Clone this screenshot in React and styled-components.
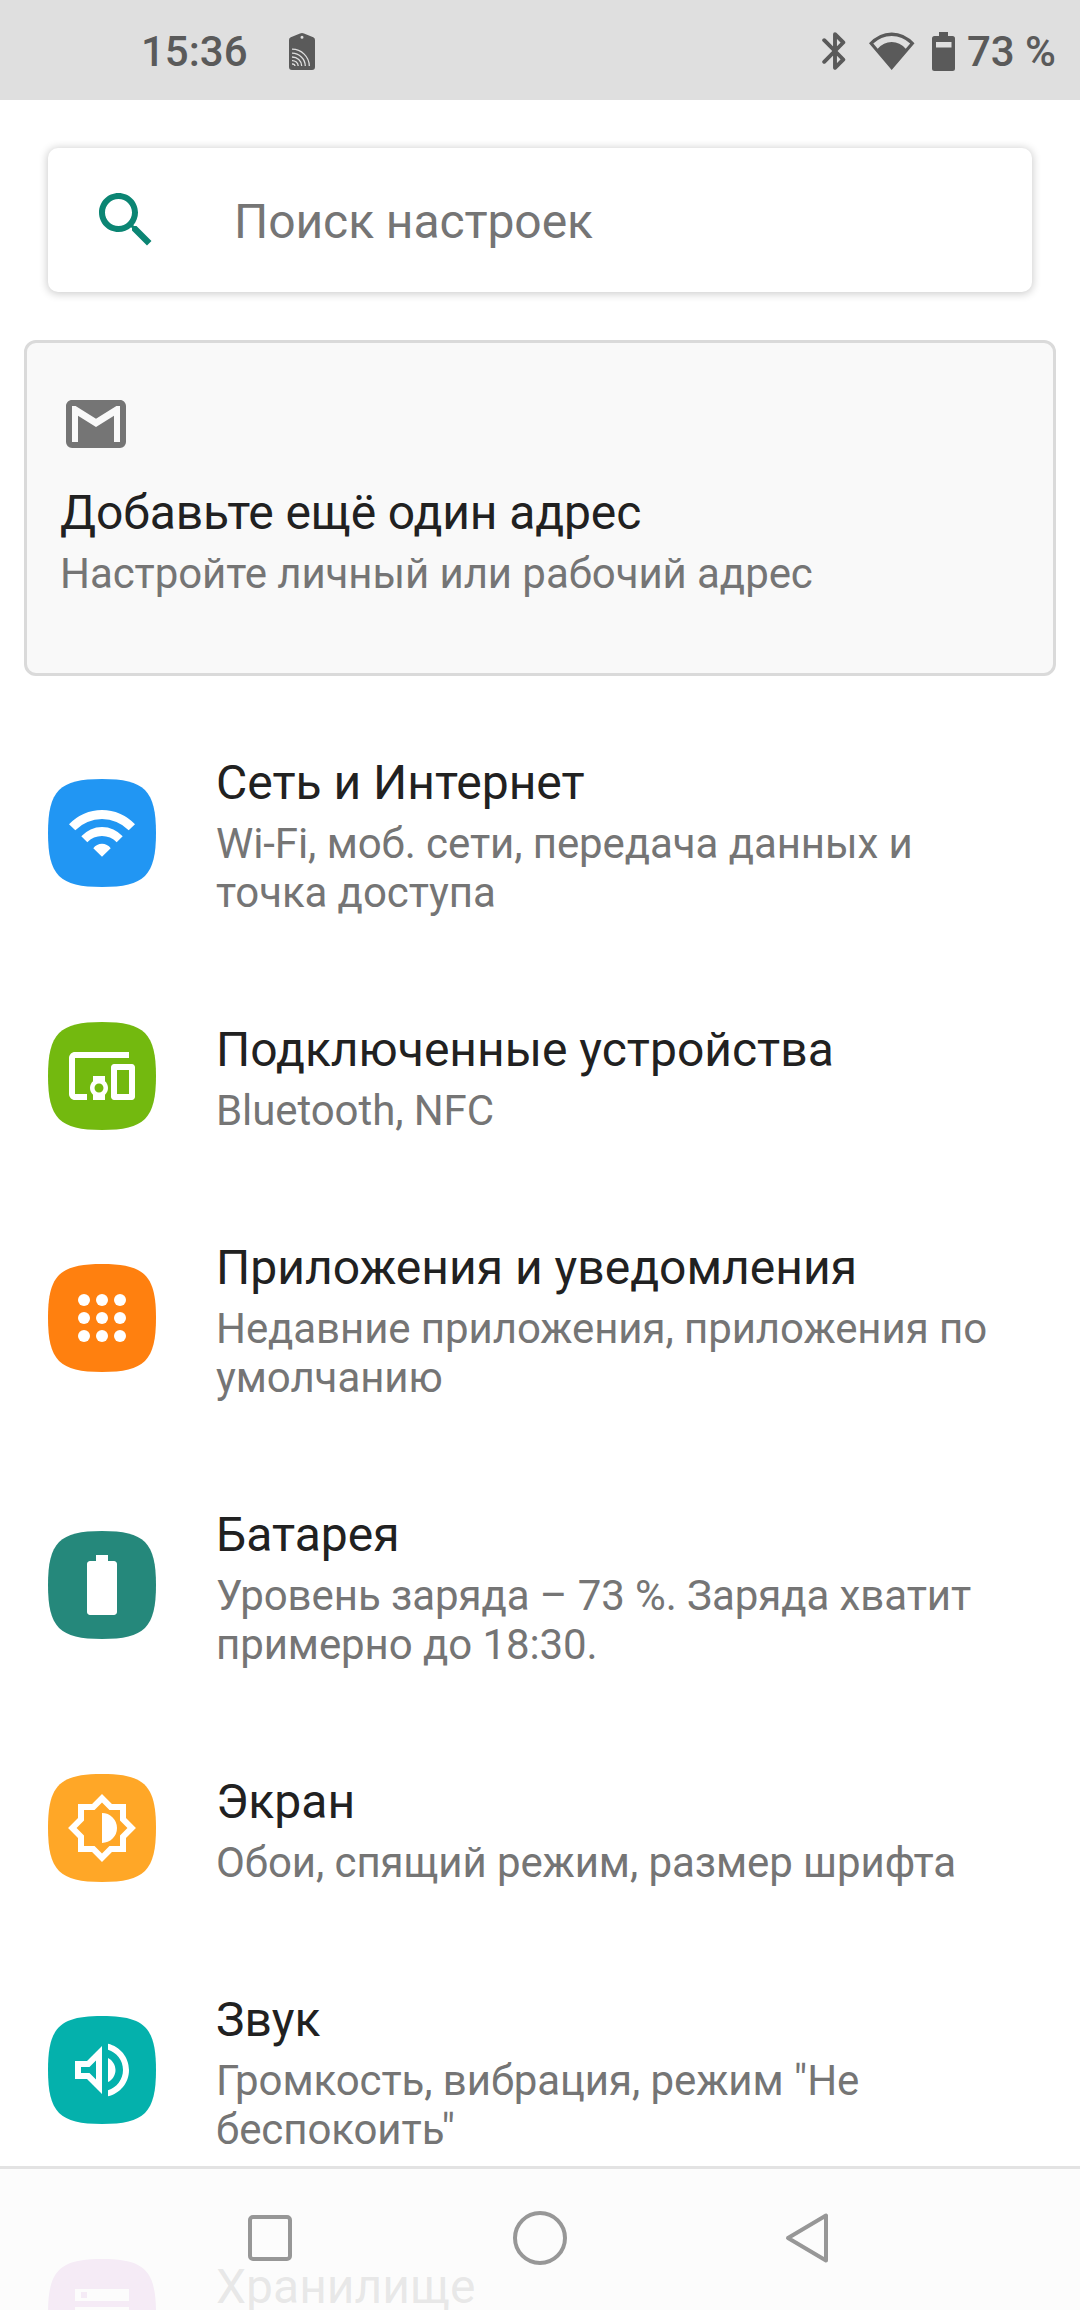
import React from "react";
import styled, { createGlobalStyle } from "styled-components";

const GlobalStyle = createGlobalStyle`
  * {
    box-sizing: border-box;
  }
  body {
    margin: 0;
    background: #fff;
    font-family: Roboto, "Noto Sans", sans-serif;
  }
`;

const settings = [
  {
    title: "Сеть и Интернет",
    lines: ["Wi-Fi, моб. сети, передача данных и", "точка доступа"],
    color: "#2196f3",
    icon: (
      <path d="M1 9.1A15.07 15.07 0 0 1 23 9.1L20.9 11.05A12.6 12.6 0 0 0 3.1 11.05zM5.1 13.1A9.2 9.2 0 0 1 18.9 13.1L16.9 15.05A6.8 6.8 0 0 0 7.1 15.05zM9.1 17.05A3.66 3.66 0 0 1 14.9 17.05L12 19.95z" />
    ),
  },
  {
    title: "Подключенные устройства",
    lines: ["Bluetooth, NFC"],
    color: "#73b90f",
    icon: (
      <path d="M3 6h18V4H3c-1.1 0-2 .9-2 2v12c0 1.1.9 2 2 2h4v-2H3V6zm10 6H9v1.78c-.61.55-1 1.33-1 2.22s.39 1.67 1 2.22V20h4v-1.78c.61-.55 1-1.34 1-2.22s-.39-1.67-1-2.22V12zm-2 5.5c-.83 0-1.5-.67-1.5-1.5s.67-1.5 1.5-1.5 1.5.67 1.5 1.5-.67 1.5-1.5 1.5zM22 8h-6c-.5 0-1 .5-1 1v10c0 .5.5 1 1 1h6c.5 0 1-.5 1-1V9c0-.5-.5-1-1-1zm-1 10h-4v-8h4v8z" />
    ),
  },
  {
    title: "Приложения и уведомления",
    lines: ["Недавние приложения, приложения по", "умолчанию"],
    color: "#ff800f",
    icon: [6, 12, 18].map((y) =>
      [6, 12, 18].map((x) => <circle key={`${x}-${y}`} cx={x} cy={y} r="2" />)
    ),
  },
  {
    title: "Батарея",
    lines: ["Уровень заряда – 73 %. Заряда хватит", "примерно до 18:30."],
    color: "#25887b",
    icon: (
      <path d="M16 4h-2V2h-4v2H8c-.55 0-1 .45-1 1v16c0 .55.45 1 1 1h8c.55 0 1-.45 1-1V5c0-.55-.45-1-1-1z" />
    ),
  },
  {
    title: "Экран",
    lines: ["Обои, спящий режим, размер шрифта"],
    color: "#ffa727",
    icon: (
      <path d="M20 8.69V4h-4.69L12 .69 8.69 4H4v4.69L.69 12 4 15.31V20h4.69L12 23.31 15.31 20H20v-4.69L23.31 12 20 8.69zm-2 5.79V18h-3.52L12 20.48 9.52 18H6v-3.52L3.52 12 6 9.52V6h3.52L12 3.52 14.48 6H18v3.52L20.48 12 18 14.48zM12 17V7a5 5 0 0 1 0 10z" />
    ),
  },
  {
    title: "Звук",
    lines: ['Громкость, вибрация, режим "Не', 'беспокоить"'],
    color: "#04b1ac",
    icon: (
      <path d="M3 9v6h4l5 5V4L7 9H3zm7-.17v6.34L7.83 13H5v-2h2.83L10 8.83zM16.5 12c0-1.77-1.02-3.29-2.5-4.03v8.05c1.48-.73 2.5-2.25 2.5-4.02zM14 3.23v2.06c2.89.86 5 3.54 5 6.71s-2.11 5.85-5 6.71v2.06c4.01-.91 7-4.49 7-8.77s-2.99-7.86-7-8.77z" />
    ),
  },
  {
    title: "Хранилище",
    lines: [],
    color: "#ab47bc",
    icon: (
      <path d="M3 20h18v-4H3v4zm2-3h2v2H5v-2zM3 4v4h18V4H3zm4 3H5V5h2v2zm-4 7h18v-4H3v4zm2-3h2v2H5v-2z" />
    ),
  },
];

const SettingIcon = ({ color, children }) => (
  <IconTile viewBox="0 0 108 108">
    <path
      fill={color}
      d="M54 0C11.5 0 0 11.5 0 54s11.5 54 54 54 54-11.5 54-54S96.5 0 54 0z"
    />
    <g fill="#fff" transform="translate(18 18) scale(3)">
      {children}
    </g>
  </IconTile>
);

const App = () => {
  return (
    <Screen>
      <GlobalStyle />
      <StatusBar>
        <Clock>15:36</Clock>
        <TagIcon viewBox="0 0 26 37">
          <path
            fill="#5a5a5a"
            fillRule="evenodd"
            d="M0 7Q0 5 1.8 4.3L11 .4Q13 -.4 15 .4L24.200 4.3Q26 5 26 7V34Q26 37 23 37H3Q0 37 0 34zM13 2.800A1.500 1.500 0 1 0 13 5.800A1.500 1.500 0 1 0 13 2.800z"
          />
          <g fill="none" stroke="#dfdfdf" strokeWidth="1.3">
            <path d="M3 16.200A17.300 17 0 0 1 20.300 33M3 20.200A13.300 13 0 0 1 16.300 33M3 24A9.600 9.200 0 0 1 12.700 33M3 27.600A6 5.600 0 0 1 9.200 33M3 31A2.800 2.300 0 0 1 6 33" />
          </g>
        </TagIcon>
        <StatusRight>
          <BluetoothIcon viewBox="0 0 24 38">
            <path
              fill="none"
              stroke="#5a5a5a"
              strokeWidth="3.9"
              strokeLinecap="round"
              strokeLinejoin="round"
              d="M2.200 8.200L21.300 27.500 13 35.800V2.200L21.300 10.500 2.200 29.800"
            />
          </BluetoothIcon>
          <WifiIcon viewBox="0 0 46 38">
            <path
              fill="#5a5a5a"
              fillRule="evenodd"
              d="M0 11.300Q10 .5 22.700 .5T45.500 11.300L22.700 38zM4.300 11.600L8.700 16.800Q14.500 10 22.700 10T36.700 16.800L41.200 11.600Q33.500 3.900 22.700 3.900T4.300 11.600z"
            />
          </WifiIcon>
          <BatteryIcon viewBox="0 0 23 39">
            <path
              fill="#5a5a5a"
              fillRule="evenodd"
              d="M7 0h9v4h4.500Q23 4 23 6.500V36.500Q23 39 20.500 39H2.500Q0 39 0 36.500V6.500Q0 4 2.500 4H7zM4 10V15.500H19.500V10z"
            />
          </BatteryIcon>
          <Percent>73 %</Percent>
        </StatusRight>
      </StatusBar>

      <SearchBar>
        <SearchIcon viewBox="0 0 24 24">
          <path d="M15.500 14h-.79l-.28-.27C15.410 12.590 16 11.110 16 9.500 16 5.910 13.090 3 9.500 3S3 5.910 3 9.500 5.910 16 9.500 16c1.610 0 3.090-.59 4.230-1.570l.27.28v.79l5 4.990L20.490 19l-4.990-5zm-6 0C7.010 14 5 11.990 5 9.500S7.010 5 9.500 5 14 7.010 14 9.500 11.990 14 9.500 14z" />
        </SearchIcon>
        <Placeholder>Поиск настроек</Placeholder>
      </SearchBar>

      <Card>
        <MailIcon viewBox="0 0 24 24">
          <path d="M20 18h-2V9.250L12 13 6 9.250V18H4V6h1.200l6.800 4.250L18.800 6H20m0-2H4c-1.110 0-2 .89-2 2v12a2 2 0 0 0 2 2h16a2 2 0 0 0 2-2V6c0-1.110-.9-2-2-2z" />
        </MailIcon>
        <Title $tight>Добавьте ещё один адрес</Title>
        <Summary>Настройте личный или рабочий адрес</Summary>
      </Card>

      <List>
        {settings.map((item) => (
          <Row key={item.title}>
            <SettingIcon color={item.color}>{item.icon}</SettingIcon>
            <RowText>
              <Title>{item.title}</Title>
              <Summary>
                {item.lines.map((line) => (
                  <div key={line}>{line}</div>
                ))}
              </Summary>
            </RowText>
          </Row>
        ))}
      </List>

      <NavBar>
        <NavIcon viewBox="0 0 60 60">
          <rect x="10" y="9" width="40" height="42" rx="3" />
        </NavIcon>
        <NavIcon viewBox="0 0 60 60">
          <circle cx="30" cy="30" r="25" />
        </NavIcon>
        <NavIcon viewBox="0 0 60 60">
          <path d="M46 7.500V52.500L8 30z" strokeLinejoin="round" />
        </NavIcon>
      </NavBar>
    </Screen>
  );
};

export default App;

const Screen = styled.div`
  position: relative;
  width: 1080px;
  height: 2310px;
  overflow: hidden;
  background: #fff;
`;

const StatusBar = styled.div`
  display: flex;
  align-items: center;
  height: 100px;
  padding: 2px 24px 0 141px;
  background: #dfdfdf;
  color: #5a5a5a;
  font-size: 42px;
  font-weight: 500;
`;

const Clock = styled.span`
  width: 148px;
`;

const TagIcon = styled.svg`
  width: 26px;
  height: 37px;
`;

const StatusRight = styled.div`
  display: flex;
  align-items: center;
  margin-left: auto;
`;

const BluetoothIcon = styled.svg`
  width: 24px;
  height: 38px;
  margin-right: 23px;
`;

const WifiIcon = styled.svg`
  width: 46px;
  height: 38px;
  margin-right: 17px;
`;

const BatteryIcon = styled.svg`
  width: 23px;
  height: 39px;
  margin-right: 12px;
`;

const Percent = styled.span`
  white-space: nowrap;
`;

const SearchBar = styled.div`
  display: flex;
  align-items: center;
  height: 144px;
  margin: 48px 48px 0;
  padding-left: 42px;
  border-radius: 10px;
  background: #fff;
  box-shadow: 0 1px 8px 1px rgba(0, 0, 0, 0.2);
`;

const SearchIcon = styled.svg`
  width: 72px;
  height: 72px;
  fill: #0b8573;
`;

const Placeholder = styled.span`
  margin-left: 72px;
  padding-top: 2px;
  font-size: 48px;
  letter-spacing: -0.08px;
  color: #757575;
`;

const Card = styled.div`
  height: 336px;
  margin: 48px 24px 0;
  padding: 45px 33px;
  border: 3px solid #dadada;
  border-radius: 12px;
  background: #f9f9f9;
`;

const MailIcon = styled.svg`
  display: block;
  width: 72px;
  height: 72px;
  margin-bottom: 21px;
  fill: #757575;
`;

const Title = styled.div`
  font-size: 48px;
  line-height: 64px;
  letter-spacing: ${(props) => (props.$tight ? "-0.12px" : "normal")};
  color: #212121;
`;

const Summary = styled.div`
  margin-top: 4px;
  font-size: 42px;
  line-height: 49px;
  letter-spacing: -0.08px;
  color: #757575;
  white-space: nowrap;
`;

const List = styled.div`
  padding-top: 24px;
`;

const Row = styled.div`
  display: flex;
  align-items: center;
  gap: 60px;
  min-height: 218px;
  padding: 50px 48px 51px;

  /* the last row continues below the screen edge */
  &:last-child {
    align-items: flex-start;
  }
  &:last-child svg {
    margin-top: 5px;
  }
`;

const RowText = styled.div`
  padding-top: 1px;
  margin-bottom: -1px;
`;

const IconTile = styled.svg`
  flex: none;
  width: 108px;
  height: 108px;
`;

const NavBar = styled.div`
  position: absolute;
  left: 0;
  right: 0;
  bottom: 0;
  display: flex;
  justify-content: center;
  gap: 210px;
  height: 144px;
  padding-top: 39px;
  border-top: 3px solid #e3e3e3;
  background: rgba(252, 252, 252, 0.91);
`;

const NavIcon = styled.svg`
  width: 60px;
  height: 60px;
  fill: none;
  stroke: #979797;
  stroke-width: 4;
`;
